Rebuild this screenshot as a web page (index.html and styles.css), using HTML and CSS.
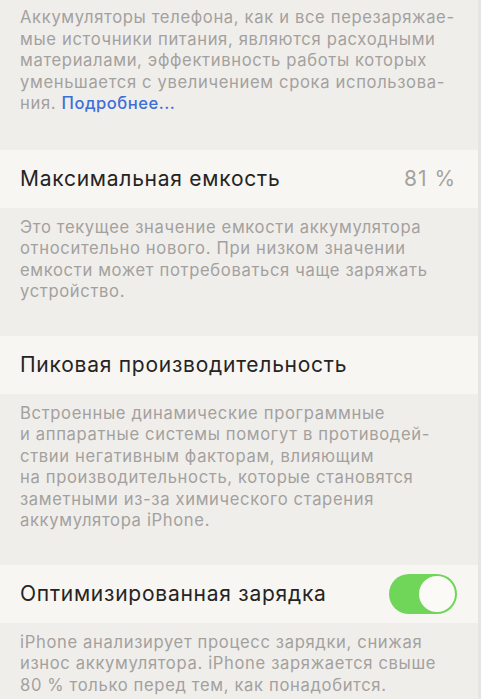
FILE: index.html
```html
<!DOCTYPE html>
<html lang="ru">
<head>
<meta charset="utf-8">
<title>Аккумулятор</title>
<link rel="stylesheet" href="styles.css">
</head>
<body>
<div class="screen">
  <p class="note intro">
    <span class="ln">Аккумуляторы телефона, как и все перезаряжае-</span>
    <span class="ln">мые источники питания, являются расходными</span>
    <span class="ln">материалами, эффективность работы которых</span>
    <span class="ln">уменьшается с увеличением срока использова-</span>
    <span class="ln">ния. <a class="link" href="#">Подробнее...</a></span>
  </p>

  <div class="cell">
    <span class="label">Максимальная емкость</span>
    <span class="value">81 %</span>
  </div>
  <p class="note">
    <span class="ln">Это текущее значение емкости аккумулятора</span>
    <span class="ln">относительно нового. При низком значении</span>
    <span class="ln">емкости может потребоваться чаще заряжать</span>
    <span class="ln">устройство.</span>
  </p>

  <div class="cell">
    <span class="label">Пиковая производительность</span>
  </div>
  <p class="note">
    <span class="ln">Встроенные динамические программные</span>
    <span class="ln">и аппаратные системы помогут в противодей-</span>
    <span class="ln">ствии негативным факторам, влияющим</span>
    <span class="ln">на производительность, которые становятся</span>
    <span class="ln">заметными из-за химического старения</span>
    <span class="ln">аккумулятора iPhone.</span>
  </p>

  <div class="cell">
    <span class="label">Оптимизированная зарядка</span>
    <span class="toggle"><span class="knob"></span></span>
  </div>
  <p class="note">
    <span class="ln">iPhone анализирует процесс зарядки, снижая</span>
    <span class="ln">износ аккумулятора. iPhone заряжается свыше</span>
    <span class="ln">80 % только перед тем, как понадобится.</span>
  </p>
</div>
</body>
</html>
```

FILE: styles.css
```css
html, body {
  margin: 0;
  padding: 0;
  background: #f0eeeb;
}

.screen {
  width: 481px;
  height: 699px;
  overflow: hidden;
  box-sizing: border-box;
  border-right: 3px solid #e7e5e1;
  font-family: Inter, "Noto Sans", "DejaVu Sans", sans-serif;
  display: flex;
  flex-direction: column;
}

.note {
  margin: 9px 0 33px;
  padding: 0 20px;
  font-size: 16.6px;
  line-height: 21.5px;
  color: #a3a19e;
  letter-spacing: 0.65px;
}

.note.intro {
  margin: 7px 0 35px;
}

.ln {
  display: block;
  white-space: nowrap;
}

.link {
  color: #3d6fd8;
  text-decoration: none;
  font-weight: 500;
  letter-spacing: 0.5px;
}

.cell {
  height: 58px;
  flex: none;
  background: #f8f6f3;
  display: flex;
  align-items: center;
  justify-content: space-between;
  padding: 0 22px 0 20px;
}

.label {
  font-size: 21px;
  color: #252423;
  letter-spacing: 0.75px;
}

.value {
  font-size: 21px;
  color: #a5a3a0;
  letter-spacing: 1px;
}

.toggle {
  width: 68px;
  height: 40px;
  border-radius: 20px;
  background: #6fd65a;
  display: flex;
  align-items: center;
  justify-content: flex-end;
  padding: 2px;
  box-sizing: border-box;
  margin-right: -1px;
}

.knob {
  width: 36px;
  height: 36px;
  border-radius: 50%;
  background: #fbfaf7;
}
```
